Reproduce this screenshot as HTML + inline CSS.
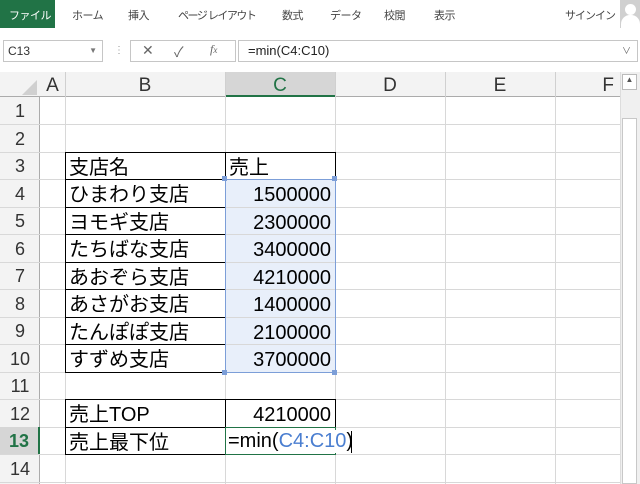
<!DOCTYPE html>
<html><head><meta charset="utf-8"><style>
*{margin:0;padding:0;box-sizing:border-box}
body{width:640px;height:484px;overflow:hidden;background:#fff;font-family:"Liberation Sans","Noto Sans CJK JP",sans-serif;position:relative}
.a{position:absolute}
.tab{position:absolute;top:7px;font-size:11px;color:#444;letter-spacing:-0.5px}
.gl{position:absolute;background:#d8d8d8}
.cell{position:absolute;font-size:20px;color:#000;line-height:27px;white-space:nowrap}
.rh{position:absolute;left:0;width:40px;text-align:center;font-size:18px;color:#333;line-height:29px}
.ch{position:absolute;top:72px;height:25px;font-size:19px;color:#333;text-align:center;line-height:27px}
</style></head><body>
<div class="a" style="left:0;top:0;width:55px;height:28px;background:#217346"></div>
<div class="tab" style="left:9px;color:#fff">ファイル</div>
<div class="tab" style="left:72px">ホーム</div>
<div class="tab" style="left:128px">挿入</div>
<div class="tab" style="left:178px;letter-spacing:-1.5px">ページ レイアウト</div>
<div class="tab" style="left:282px">数式</div>
<div class="tab" style="left:330px">データ</div>
<div class="tab" style="left:384px">校閲</div>
<div class="tab" style="left:434px">表示</div>
<div class="tab" style="left:565px;letter-spacing:-1px">サインイン</div>
<div class="a" style="left:620px;top:0;width:20px;height:28px;background:#d0d0d0"></div>
<div class="a" style="left:625px;top:4px;width:11px;height:11px;border-radius:50%;background:#fff"></div>
<div class="a" style="left:621px;top:15px;width:19px;height:13px;border-radius:9px 9px 0 0;background:#fff"></div>
<!-- formula bar -->
<div class="a" style="left:3px;top:40px;width:100px;height:22px;border:1px solid #c6c6c6;font-size:12px;line-height:20px;padding-left:4px;color:#333">C13<span style="position:absolute;right:5px;font-size:8px;color:#777">▼</span></div>
<div class="a" style="left:114px;top:45px;font-size:10px;color:#999">⋮</div>
<div class="a" style="left:130px;top:40px;width:106px;height:22px;border:1px solid #c6c6c6"></div>
<div class="a" style="left:142px;top:42px;font-size:14px;color:#666">✕</div>
<div class="a" style="left:174px;top:42px;font-size:14px;color:#666">✓</div>
<div class="a" style="left:210px;top:42px;font-size:12px;color:#666;font-style:italic;font-family:'Liberation Serif',serif">f<span style="font-size:9px">x</span></div>
<div class="a" style="left:238px;top:40px;width:400px;height:22px;border:1px solid #c6c6c6;font-size:13px;line-height:20px;padding-left:9px;color:#222">=min(C4:C10)<span style="position:absolute;right:6px;font-size:9px;color:#666">∨</span></div>
<!-- headers -->
<div class="a" style="left:0;top:72px;width:620px;height:25px;background:#f3f3f3;border-bottom:1px solid #ababab"></div>
<div class="a" style="left:0;top:97px;width:40px;height:387px;background:#f3f3f3;border-right:1px solid #ababab"></div>
<div class="a" style="left:22px;top:80px;width:0;height:0;border-left:15px solid transparent;border-bottom:15px solid #d0d0d0"></div>
<div class="a" style="left:225px;top:72px;width:110px;height:25px;background:#d6d6d6;border-bottom:2px solid #217346"></div>
<div class="ch" style="left:40px;width:25px">A</div>
<div class="ch" style="left:65px;width:160px">B</div>
<div class="ch" style="left:225px;width:110px;color:#217346">C</div>
<div class="ch" style="left:335px;width:110px">D</div>
<div class="ch" style="left:445px;width:110px">E</div>
<div class="ch" style="left:555px;width:65px;text-align:right;padding-right:6px">F</div>
<div class="a" style="left:65px;top:72px;width:1px;height:25px;background:#d0d0d0"></div>
<div class="a" style="left:225px;top:72px;width:1px;height:25px;background:#d0d0d0"></div>
<div class="a" style="left:335px;top:72px;width:1px;height:25px;background:#d0d0d0"></div>
<div class="a" style="left:445px;top:72px;width:1px;height:25px;background:#d0d0d0"></div>
<div class="a" style="left:555px;top:72px;width:1px;height:25px;background:#d0d0d0"></div>
<!-- scrollbar -->
<div class="a" style="left:620px;top:72px;width:20px;height:412px;background:#f0f0f0;border-left:1px solid #ddd"></div>
<div class="a" style="left:622px;top:74px;width:15px;height:16px;border:1px solid #bbb;background:#fff;font-size:8px;text-align:center;color:#555">▲</div>
<div class="a" style="left:622px;top:118px;width:15px;height:366px;border:1px solid #c8c8c8;background:#fff"></div>
<!-- selection fill -->
<div class="a" style="left:226px;top:180px;width:109px;height:192px;background:#e8effa"></div>
<!-- grid vertical -->
<div class="gl" style="left:65px;top:97px;width:1px;height:387px"></div>
<div class="gl" style="left:225px;top:97px;width:1px;height:387px"></div>
<div class="gl" style="left:335px;top:97px;width:1px;height:387px"></div>
<div class="gl" style="left:445px;top:97px;width:1px;height:387px"></div>
<div class="gl" style="left:555px;top:97px;width:1px;height:387px"></div>
<div id="rows"></div>
<script>
var h='';for(var n=1;n<=14;n++){var t=97+(n-1)*27.5;
h+='<div class="gl" style="left:0;top:'+(t+27)+'px;width:620px;height:1px"></div>';
h+='<div class="rh" style="top:'+t+'px;height:27px;'+(n==13?'background:#d6d6d6;color:#217346;font-weight:bold;border-right:2px solid #217346':'')+'">'+n+'</div>';}
document.getElementById('rows').innerHTML=h;
</script>
<!-- table borders -->
<div class="a" style="left:65px;top:152px;width:271px;height:221px;border:1px solid #000"></div>
<div class="a" style="left:225px;top:152px;width:1px;height:221px;background:#000"></div>
<div class="a" style="left:65px;top:179px;width:160px;height:1px;background:#000"></div>
<div class="a" style="left:65px;top:207px;width:160px;height:1px;background:#000"></div>
<div class="a" style="left:65px;top:234px;width:160px;height:1px;background:#000"></div>
<div class="a" style="left:65px;top:262px;width:160px;height:1px;background:#000"></div>
<div class="a" style="left:65px;top:289px;width:160px;height:1px;background:#000"></div>
<div class="a" style="left:65px;top:317px;width:160px;height:1px;background:#000"></div>
<div class="a" style="left:65px;top:344px;width:160px;height:1px;background:#000"></div>
<div class="a" style="left:225px;top:179px;width:111px;height:194px;border:1px solid #7c9ed8"></div>
<div class="a" style="left:222px;top:176px;width:5px;height:5px;background:#7c9ed8"></div>
<div class="a" style="left:332px;top:176px;width:5px;height:5px;background:#7c9ed8"></div>
<div class="a" style="left:222px;top:370px;width:5px;height:5px;background:#7c9ed8"></div>
<div class="a" style="left:332px;top:370px;width:5px;height:5px;background:#7c9ed8"></div>
<div class="a" style="left:65px;top:399px;width:271px;height:56px;border:1px solid #000"></div>
<div class="a" style="left:225px;top:399px;width:1px;height:56px;background:#000"></div>
<div class="a" style="left:65px;top:427px;width:160px;height:1px;background:#000"></div>
<div class="a" style="left:225px;top:427px;width:111px;height:28px;border:1px solid #217346"></div>
<!-- text -->
<div class="cell" style="left:69px;top:155px">支店名</div>
<div class="cell" style="left:229px;top:155px">売上</div>
<div class="cell" style="left:69px;top:182px">ひまわり支店</div>
<div class="cell" style="left:69px;top:210px">ヨモギ支店</div>
<div class="cell" style="left:69px;top:237px">たちばな支店</div>
<div class="cell" style="left:69px;top:265px">あおぞら支店</div>
<div class="cell" style="left:69px;top:292px">あさがお支店</div>
<div class="cell" style="left:69px;top:320px">たんぽぽ支店</div>
<div class="cell" style="left:69px;top:347px">すずめ支店</div>
<div class="cell" style="right:309px;top:182px">1500000</div>
<div class="cell" style="right:309px;top:210px">2300000</div>
<div class="cell" style="right:309px;top:237px">3400000</div>
<div class="cell" style="right:309px;top:265px">4210000</div>
<div class="cell" style="right:309px;top:292px">1400000</div>
<div class="cell" style="right:309px;top:320px">2100000</div>
<div class="cell" style="right:309px;top:347px">3700000</div>
<div class="cell" style="left:69px;top:402px">売上TOP</div>
<div class="cell" style="right:309px;top:402px">4210000</div>
<div class="cell" style="left:69px;top:430px">売上最下位</div>
<div class="cell" style="left:228px;top:430px;background:#fff;padding-right:2px;height:23px;line-height:23px">=min(<span style="color:#4a7ed0">C4:C10</span>)</div>
<div class="a" style="left:351px;top:431px;width:1px;height:22px;background:#000"></div>
</body></html>
